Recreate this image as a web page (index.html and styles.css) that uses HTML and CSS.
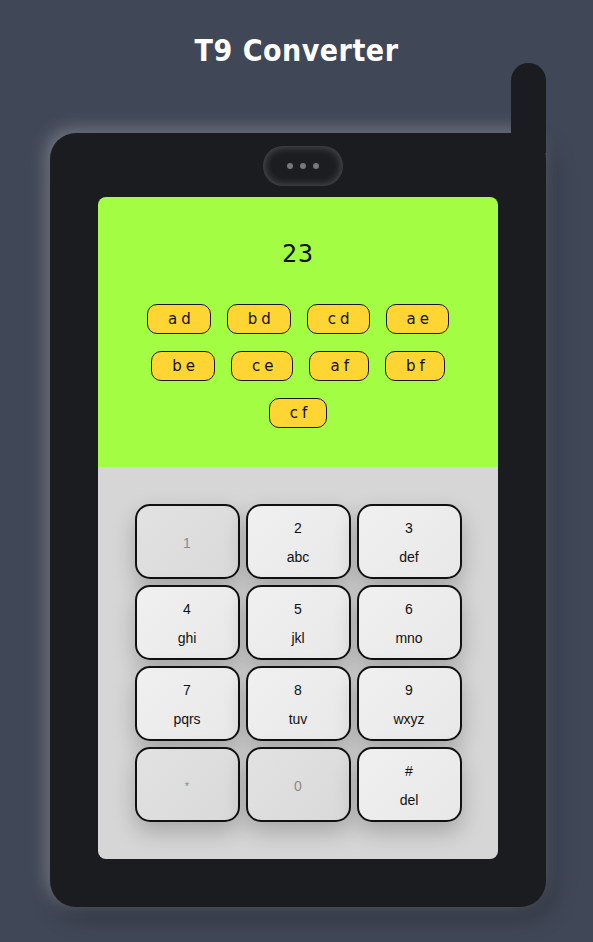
FILE: index.html
```html
<!DOCTYPE html>
<html lang="en">
<head>
<meta charset="utf-8">
<title>T9 Converter</title>
<link rel="stylesheet" href="styles.css">
</head>
<body>
<h1 class="title">T9 Converter</h1>
<div class="phone">
  <div class="antenna"></div>
  <div class="speaker"><span class="dot"></span><span class="dot"></span><span class="dot"></span></div>
  <div class="screen">
    <div class="display">
      <div class="number">23</div>
      <div class="chips">
        <span class="chip">ad</span>
        <span class="chip">bd</span>
        <span class="chip">cd</span>
        <span class="chip">ae</span>
        <span class="chip">be</span>
        <span class="chip">ce</span>
        <span class="chip">af</span>
        <span class="chip">bf</span>
        <span class="chip">cf</span>
      </div>
    </div>
    <div class="pad">
      <div class="keys">
        <div class="key off"><span>1</span></div>
        <div class="key"><span>2</span><span>abc</span></div>
        <div class="key"><span>3</span><span>def</span></div>
        <div class="key"><span>4</span><span>ghi</span></div>
        <div class="key"><span>5</span><span>jkl</span></div>
        <div class="key"><span>6</span><span>mno</span></div>
        <div class="key"><span>7</span><span>pqrs</span></div>
        <div class="key"><span>8</span><span>tuv</span></div>
        <div class="key"><span>9</span><span>wxyz</span></div>
        <div class="key off"><span class="star">*</span></div>
        <div class="key off"><span>0</span></div>
        <div class="key"><span>#</span><span>del</span></div>
      </div>
    </div>
  </div>
</div>
</body>
</html>
```

FILE: styles.css
```css
* { box-sizing: border-box; }
body {
  margin: 0;
  background: #404756;
  width: 593px;
  height: 942px;
  overflow: hidden;
}
.title {
  margin: 0;
  padding-top: 32px;
  height: 133px;
  text-align: center;
  color: #ffffff;
  font-family: "DejaVu Sans Condensed", "DejaVu Sans", sans-serif;
  font-weight: bold;
  font-size: 30px;
  line-height: 38px;
  letter-spacing: 0.5px;
}
.phone {
  position: relative;
  margin-left: 50px;
  width: 496px;
  height: 774px;
  background: #1b1c20;
  border-radius: 26px;
  padding-top: 13px;
  box-shadow: -4px -4px 18px rgba(255,255,255,0.28), 6px 10px 24px rgba(0,0,0,0.28);
}
.antenna {
  position: absolute;
  right: 0;
  top: -70px;
  width: 35px;
  height: 90px;
  background: #1b1c20;
  border-radius: 18px 18px 0 0;
}
.speaker {
  margin-left: 213px;
  width: 80px;
  height: 40px;
  border-radius: 20px;
  background: #1c1d21;
  box-shadow: inset 0 0 10px rgba(255,255,255,0.28);
  display: flex;
  align-items: center;
  justify-content: center;
  gap: 7px;
}
.dot {
  width: 6px;
  height: 6px;
  border-radius: 50%;
  background: #77787b;
}
.screen {
  margin: 11px 48px 0;
  width: 400px;
  height: 662px;
  border-radius: 8px;
  overflow: hidden;
  display: flex;
  flex-direction: column;
}
.display {
  height: 270px;
  background: #a3fd42;
  padding-top: 42px;
  display: flex;
  flex-direction: column;
  align-items: center;
}
.number {
  font-family: "DejaVu Sans Mono", monospace;
  font-size: 25px;
  line-height: 30px;
  letter-spacing: 1px;
  color: #111;
}
.chips {
  margin-top: 35px;
  width: 320px;
  display: flex;
  flex-wrap: wrap;
  justify-content: center;
  gap: 17px 16px;
}
.chip {
  height: 30px;
  padding: 0 15px 0 20px;
  border: 1px solid #1a1a1a;
  border-radius: 10px;
  background: #fed533;
  font-family: "DejaVu Sans", sans-serif;
  font-size: 15px;
  line-height: 28px;
  letter-spacing: 4px;
  color: #111;
}
.pad {
  flex: 1;
  background: #d6d6d6;
  padding: 37px 0;
  display: flex;
  justify-content: center;
}
.keys {
  display: grid;
  grid-template-columns: repeat(3, 105px);
  grid-auto-rows: 75px;
  gap: 6px 6px;
}
.key {
  border: 2px solid #111;
  border-radius: 15px;
  background: linear-gradient(135deg, #f0f0f0, #e8e8e8);
  box-shadow: 0 10px 22px rgba(0,0,0,0.22);
  display: flex;
  flex-direction: column;
  align-items: center;
  justify-content: center;
  gap: 11px;
  padding-top: 2px;
  font-family: "Liberation Sans", Arial, sans-serif;
  font-size: 14px;
  line-height: 18px;
  color: #111;
}
.key.off {
  background: linear-gradient(135deg, #e2e2e2, #d9d9d9);
  color: #8a8a8a;
}
.star {
  font-size: 11px;
}
```
